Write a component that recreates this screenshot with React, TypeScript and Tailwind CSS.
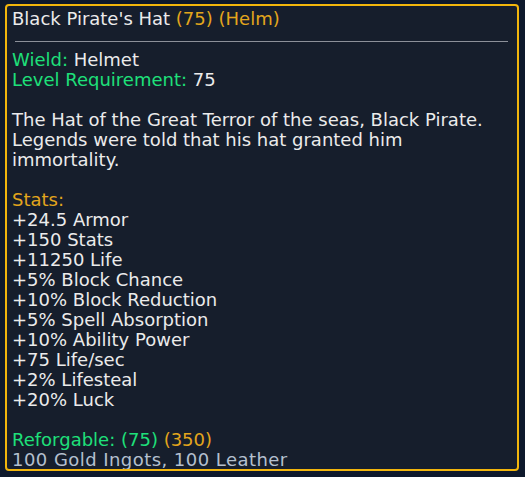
import React from "react";

const gold = "text-[#e3a61c]";
const green = "text-[#1ee07a]";

export default function App() {
  const stats = [
    "+24.5 Armor",
    "+150 Stats",
    "+11250 Life",
    "+5% Block Chance",
    "+10% Block Reduction",
    "+5% Spell Absorption",
    "+10% Ability Power",
    "+75 Life/sec",
    "+2% Lifesteal",
    "+20% Luck",
  ];
  return (
    <div
      className="w-[525px] h-[477px] bg-[#0e192c] pt-[4px] pl-[5px] overflow-hidden"
      style={{ fontFamily: '"DejaVu Sans", "Open Sans", sans-serif' }}
    >
      <div className="w-[514px] h-[467px] border-2 border-[#f2b60c] rounded-[4px] bg-[#161e2c] pl-[5px] pt-[3px] text-[18px] leading-[20px] text-[#ebebeb] overflow-hidden">
        <div>
          Black Pirate's Hat <span className={gold}>(75) (Helm)</span>
        </div>
        <div className="mt-[12px] mb-[8px] ml-[3px] mr-[9px] h-px bg-[#8c9099]" />
        <div>
          <span className={green}>Wield:</span> Helmet
        </div>
        <div>
          <span className={green}>Level Requirement:</span> 75
        </div>
        <div className="h-[20px]" />
        <div>The Hat of the Great Terror of the seas, Black Pirate.</div>
        <div>Legends were told that his hat granted him</div>
        <div>immortality.</div>
        <div className="h-[20px]" />
        <div className={gold}>Stats:</div>
        {stats.map((s) => (
          <div key={s}>{s}</div>
        ))}
        <div className="h-[20px]" />
        <div>
          <span className={green}>Reforgable: (75)</span>{" "}
          <span className={gold}>(350)</span>
        </div>
        <div className="text-[#b4c0cf] tracking-[0.45px]">100 Gold Ingots, 100 Leather</div>
      </div>
    </div>
  );
}
